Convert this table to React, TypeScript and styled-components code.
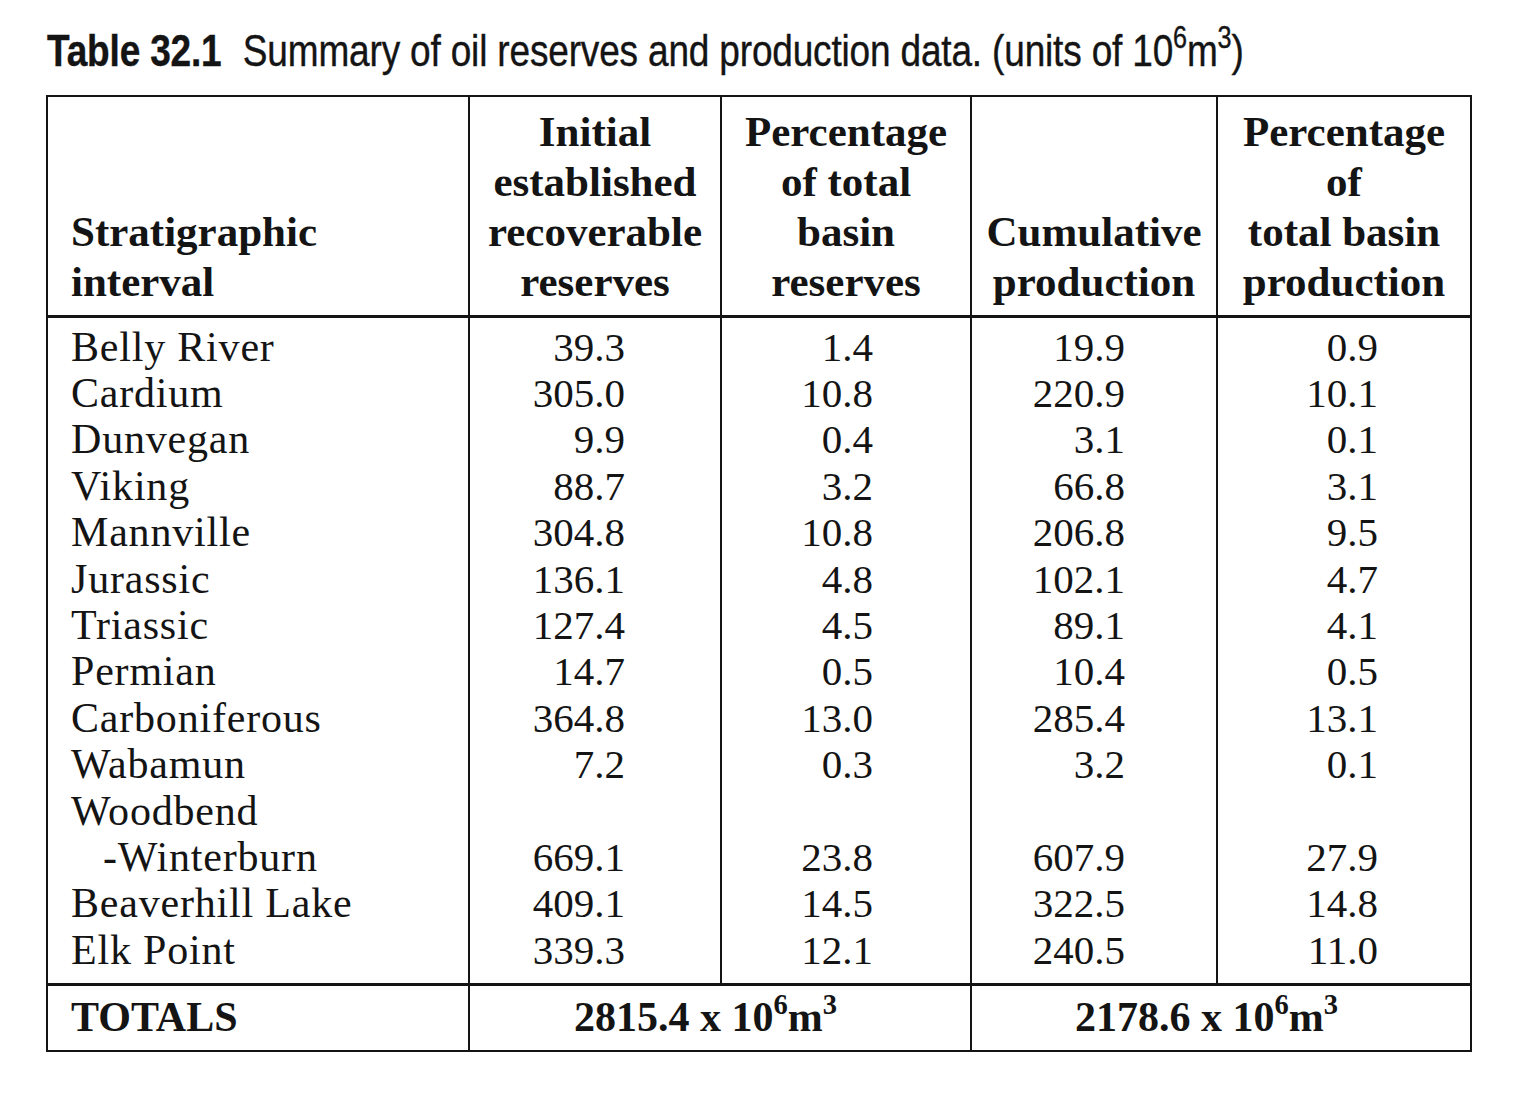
import React from "react";
import styled, { createGlobalStyle } from "styled-components";

const Global = createGlobalStyle`
  html, body { margin: 0; padding: 0; background: #ffffff; }
`;

const Page = styled.div`
  width: 1516px;
  height: 1100px;
  box-sizing: border-box;
  padding: 23px 0 0 46px;
  background: #ffffff;
  color: #141414;
`;

const Caption = styled.h1`
  margin: 0 0 16px 1px;
  height: 56px;
  font-family: "Liberation Sans", Arial, sans-serif;
  font-weight: 400;
  font-size: 45px;
  line-height: 56px;
  letter-spacing: -0.2px;
  color: #141414;
  white-space: nowrap;
`;

const CaptionInner = styled.span`
  display: inline-block;
  transform: scaleX(0.822);
  transform-origin: 0 50%;
  -webkit-text-stroke: 0.4px #141414;
`;

const CaptionLabel = styled.span`
  font-weight: 700;
  margin-right: 26px;
`;

const Sup = styled.sup`
  font-size: 0.68em;
  vertical-align: 0.6em;
  line-height: 0;
`;

const Table = styled.table`
  border-collapse: collapse;
  table-layout: fixed;
  width: 1424px;
  border: 2px solid #141414;
  font-family: "Liberation Serif", "Times New Roman", serif;
  color: #141414;
`;

const Head = styled.thead`
  tr { height: 220px; }
`;

const HeadCell = styled.th<{ $align?: "left" | "center" }>`
  border: 2px solid #141414;
  border-bottom-width: 3px;
  vertical-align: bottom;
  text-align: ${(p) => p.$align ?? "center"};
  padding: ${(p) => (p.$align === "left" ? "0 8px 8px 23px" : "0 6px 8px")};
  font-size: 43px;
  line-height: 50px;
  font-weight: 700;
  white-space: nowrap;
`;

const Body = styled.tbody`
  tr:first-child td { padding-top: 6px; }
  tr:last-child td { padding-bottom: 10px; }
`;

const NameCell = styled.td`
  border-left: 2px solid #141414;
  border-right: 2px solid #141414;
  padding: 0 0 0 23px;
  font-size: 42px;
  line-height: 46.4px;
  letter-spacing: 0.8px;
  vertical-align: bottom;
  white-space: nowrap;
`;

const Indent = styled.span`
  display: block;
  padding-left: 32px;
`;

const NumCell = styled.td<{ $pad: number }>`
  border-left: 2px solid #141414;
  border-right: 2px solid #141414;
  text-align: right;
  padding: 0 ${(p) => p.$pad}px 0 0;
  font-size: 41px;
  line-height: 46.4px;
  vertical-align: bottom;
  white-space: nowrap;
`;

const Foot = styled.tfoot`
  td {
    border: 2px solid #141414;
    border-top-width: 3px;
    padding-top: 6px;
    padding-bottom: 8px;
    font-size: 42px;
    line-height: 50px;
    font-weight: 700;
    white-space: nowrap;
  }
`;

const TotalLabel = styled.td`
  text-align: left;
  padding-left: 23px;
`;

const TotalValue = styled.td`
  text-align: center;
  padding-right: 30px;
`;

type Row = { name: React.ReactNode; v: [string, string, string, string] };

const rows: Row[] = [
  { name: "Belly River", v: ["39.3", "1.4", "19.9", "0.9"] },
  { name: "Cardium", v: ["305.0", "10.8", "220.9", "10.1"] },
  { name: "Dunvegan", v: ["9.9", "0.4", "3.1", "0.1"] },
  { name: "Viking", v: ["88.7", "3.2", "66.8", "3.1"] },
  { name: "Mannville", v: ["304.8", "10.8", "206.8", "9.5"] },
  { name: "Jurassic", v: ["136.1", "4.8", "102.1", "4.7"] },
  { name: "Triassic", v: ["127.4", "4.5", "89.1", "4.1"] },
  { name: "Permian", v: ["14.7", "0.5", "10.4", "0.5"] },
  { name: "Carboniferous", v: ["364.8", "13.0", "285.4", "13.1"] },
  { name: "Wabamun", v: ["7.2", "0.3", "3.2", "0.1"] },
  {
    name: (
      <>
        Woodbend
        <Indent>-Winterburn</Indent>
      </>
    ),
    v: ["669.1", "23.8", "607.9", "27.9"],
  },
  { name: "Beaverhill Lake", v: ["409.1", "14.5", "322.5", "14.8"] },
  { name: "Elk Point", v: ["339.3", "12.1", "240.5", "11.0"] },
];

const pads = [95, 97, 91, 92];

export default function App() {
  return (
    <Page>
      <Global />
      <Caption>
        <CaptionInner>
          <CaptionLabel>Table 32.1</CaptionLabel>
          Summary of oil reserves and production data. (units of 10<Sup>6</Sup>m<Sup>3</Sup>)
        </CaptionInner>
      </Caption>
      <Table>
        <colgroup>
          <col style={{ width: 422 }} />
          <col style={{ width: 252 }} />
          <col style={{ width: 250 }} />
          <col style={{ width: 246 }} />
          <col style={{ width: 254 }} />
        </colgroup>
        <Head>
          <tr>
            <HeadCell $align="left">
              Stratigraphic
              <br />
              interval
            </HeadCell>
            <HeadCell>
              Initial
              <br />
              established
              <br />
              recoverable
              <br />
              reserves
            </HeadCell>
            <HeadCell>
              Percentage
              <br />
              of total
              <br />
              basin
              <br />
              reserves
            </HeadCell>
            <HeadCell>
              Cumulative
              <br />
              production
            </HeadCell>
            <HeadCell>
              Percentage
              <br />
              of
              <br />
              total basin
              <br />
              production
            </HeadCell>
          </tr>
        </Head>
        <Body>
          {rows.map((r, i) => (
            <tr key={i}>
              <NameCell>{r.name}</NameCell>
              {r.v.map((val, j) => (
                <NumCell key={j} $pad={pads[j]}>
                  {val}
                </NumCell>
              ))}
            </tr>
          ))}
        </Body>
        <Foot>
          <tr>
            <TotalLabel>TOTALS</TotalLabel>
            <TotalValue colSpan={2}>
              2815.4 x 10<Sup>6</Sup>m<Sup>3</Sup>
            </TotalValue>
            <TotalValue colSpan={2}>
              2178.6 x 10<Sup>6</Sup>m<Sup>3</Sup>
            </TotalValue>
          </tr>
        </Foot>
      </Table>
    </Page>
  );
}
